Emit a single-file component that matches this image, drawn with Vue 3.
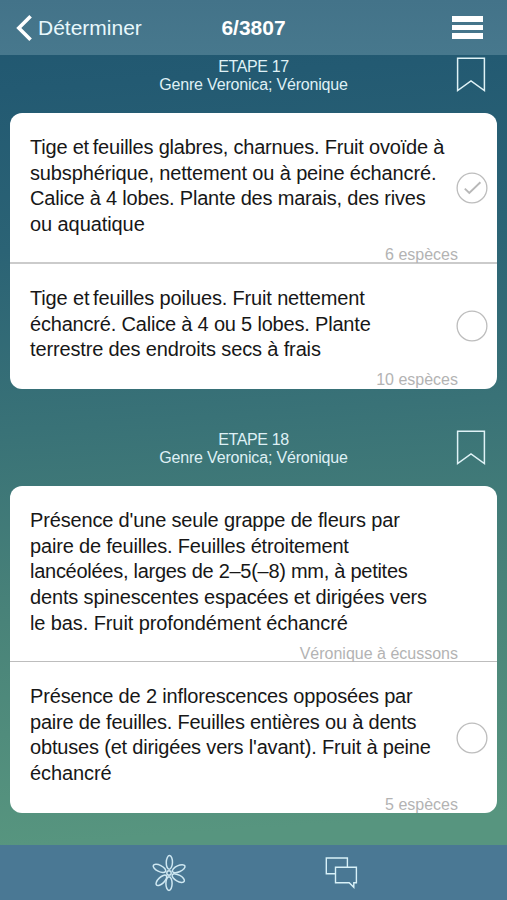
<script setup>
const steps = [
  {
    number: 17,
    taxon: 'Genre Veronica; Véronique',
    options: [
      {
        name: 'glabrous',
        state: 'checked',
        result: '6 espèces',
        lines: [
          ['Tige et\u2009feuilles glabres, charnues. Fruit ovoïde à', -0.21],
          ['subsphérique, nettement ou à peine échancré.', -0.14],
          ['Calice à 4 lobes. Plante des marais, des rives', -0.2],
          ['ou aquatique', -0.08],
        ],
      },
      {
        name: 'hairy',
        state: 'open',
        result: '10 espèces',
        lines: [
          ['Tige et\u2009feuilles poilues. Fruit nettement', -0.16],
          ['échancré. Calice à 4 ou 5 lobes. Plante', -0.19],
          ['terrestre des endroits secs à frais', -0.14],
        ],
      },
    ],
  },
  {
    number: 18,
    taxon: 'Genre Veronica; Véronique',
    options: [
      {
        name: 'single',
        state: 'none',
        result: 'Véronique à écussons',
        lines: [
          ["Présence d'une seule grappe de fleurs par", -0.16],
          ['paire de feuilles. Feuilles étroitement', -0.18],
          ['lancéolées, larges de 2–5(–8) mm, à petites', -0.27],
          ['dents spinescentes espacées et dirigées vers', -0.15],
          ['le bas. Fruit profondément échancré', -0.1],
        ],
      },
      {
        name: 'opposed',
        state: 'open',
        result: '5 espèces',
        lines: [
          ['Présence de 2 inflorescences opposées par', -0.16],
          ['paire de feuilles. Feuilles entières ou à dents', -0.2],
          ["obtuses (et dirigées vers l'avant). Fruit à peine", -0.18],
          ['échancré', -0.1],
        ],
      },
    ],
  },
]
const petals = [2, 66, 119, 180, 226, 296]
</script>

<template>
  <div class="screen">
    <header class="navbar">
      <div class="back">
        <svg class="chevron" width="18" height="28" viewBox="0 0 18 28">
          <path d="M15.6 2.2 3.8 14 15.6 25.8" fill="none" stroke="#fff" stroke-width="3.6" />
        </svg>
        <span class="back-label">Déterminer</span>
      </div>
      <h1 class="count">6/3807</h1>
      <div class="menu"><i></i><i></i><i></i></div>
    </header>

    <main class="content">
      <section v-for="step in steps" :key="step.number" class="step">
        <div class="step-head">
          <div class="step-title">
            <p class="number">ETAPE {{ step.number }}</p>
            <p class="taxon">{{ step.taxon }}</p>
          </div>
          <svg class="bookmark" width="30" height="36" viewBox="0 0 30 36">
            <path d="M1.6 2.3H28.4V34.5L15 25 1.6 34.5Z" fill="none" stroke="#dff2f6" stroke-width="1.5" />
          </svg>
        </div>
        <div class="card">
          <div v-for="opt in step.options" :key="opt.name" class="option" :class="opt.name">
            <div class="text">
              <p v-for="[line, spacing] in opt.lines" :key="line" :style="{ letterSpacing: spacing + 'px' }">{{ line }}</p>
            </div>
            <svg v-if="opt.state !== 'none'" class="radio" width="32" height="32" viewBox="0 0 32 32">
              <circle cx="16" cy="16" r="14.9" fill="none" stroke="#bdbdbd" stroke-width="1.3" />
              <path v-if="opt.state === 'checked'" d="M8.8 16.6 13.3 21 24.4 10.2" fill="none" stroke="#b8b8b8" stroke-width="1.9" />
            </svg>
            <span class="result">{{ opt.result }}</span>
          </div>
        </div>
      </section>
    </main>

    <footer class="tabbar">
      <svg class="flower" width="38" height="38" viewBox="-19 -19 38 38" fill="none" stroke="#cfe8f2" stroke-width="1.5">
        <ellipse v-for="a in petals" :key="a" cx="0" cy="-10.6" rx="3.1" ry="6.8" :transform="`rotate(${a})`" />
        <circle r="2.2" />
      </svg>
      <svg class="chat" width="34" height="34" viewBox="0 0 34 34" fill="none" stroke="#d8f1f8" stroke-width="1.4">
        <path d="M11.5 17.7H2.3V2H23.4V11" />
        <path d="M11.5 11.2H32.4V26.7H29.8V31.3L25.2 26.7H11.5Z" />
      </svg>
    </footer>
  </div>
</template>

<style>
body { margin: 0; }
</style>

<style scoped>
.screen {
  width: 507px;
  height: 900px;
  display: flex;
  flex-direction: column;
  overflow: hidden;
  font-family: "Liberation Sans", Arial, sans-serif;
  background: linear-gradient(176deg, #20566f 0, #235a72 90px, #2b6375 250px, #397277 430px, #498379 620px, #57957f 845px);
}
p, h1 { margin: 0; white-space: nowrap; }
.navbar {
  height: 55px;
  flex: none;
  display: grid;
  grid-template-columns: 1fr auto 1fr;
  align-items: center;
  box-sizing: border-box;
  padding: 0 24px 0 15px;
  color: #fff;
  background: linear-gradient(#437389, #47788d);
}
.back { display: flex; align-items: center; gap: 5px; }
.back-label { font-size: 21px; color: #e8f8fc; }
.count { font-size: 21px; font-weight: 700; padding-left: 9px; padding-top: 1px; }
.menu { justify-self: end; display: flex; flex-direction: column; gap: 3px; width: 31px; }
.menu i { height: 5.5px; background: #fff; }
.content { flex: 1; min-height: 0; }
.step + .step { margin-top: 39px; }
.step-head {
  height: 58px;
  display: grid;
  grid-template-columns: 1fr auto 1fr;
  align-items: start;
  padding: 0 21px;
  box-sizing: border-box;
}
.step-title {
  grid-column: 2;
  padding-top: 3px;
  text-align: center;
  font-size: 16px;
  line-height: 18px;
  color: #dff0f5;
}
.number { letter-spacing: -0.4px; }
.taxon { letter-spacing: -0.18px; }
.bookmark { justify-self: end; margin-top: 1px; }
.card { margin: 0 10px; background: #fff; border-radius: 12px; overflow: hidden; }
.option { position: relative; box-sizing: border-box; padding: 22px 20px 0; }
.text { font-size: 20px; line-height: 25.7px; color: #171717; }
.radio { position: absolute; right: 9px; top: 50%; margin-top: -16px; }
.result { position: absolute; right: 39px; bottom: -1px; font-size: 16px; line-height: 18px; color: #b3b3b3; }
.glabrous { height: 151px; border-bottom: 2px solid #cbcbcb; }
.hairy { height: 125px; }
.single { height: 176px; border-bottom: 1.5px solid #bdbdbd; }
.opposed { height: 151px; }
.glabrous .result, .single .result { bottom: -2px; }
.hairy .result { bottom: 0; }
.hairy .radio { margin-top: -17px; }
.tabbar {
  height: 55px;
  flex: none;
  display: flex;
  align-items: center;
  box-sizing: border-box;
  padding: 0 149px 0 150px;
  justify-content: space-between;
  background: #4a7894;
}
</style>
